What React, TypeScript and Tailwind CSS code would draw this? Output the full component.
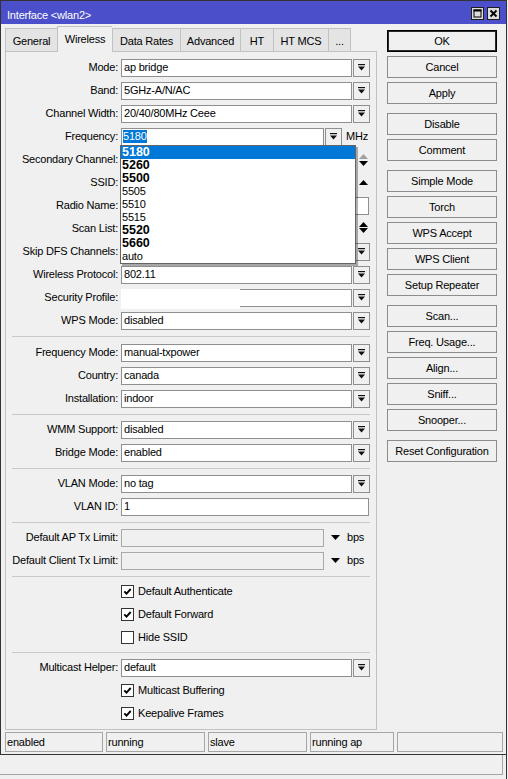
import clsx from 'clsx'
import type { ReactNode } from 'react'

function DropIcon() {
  return (
    <svg width="7" height="7" viewBox="0 0 7 7">
      <rect x="0" y="0" width="7" height="1.2" fill="#111" />
      <path d="M0 2.4H7L3.5 6.6Z" fill="#111" />
    </svg>
  )
}

function DropBtn() {
  return (
    <div className="w-[17px] h-[18px] border border-[#8f8f8f] bg-[#f0f0f0] flex items-center justify-center">
      <DropIcon />
    </div>
  )
}

function Tri({ up, grey }: { up?: boolean; grey?: boolean }) {
  return (
    <svg width="9" height="5" viewBox="0 0 9 5">
      <path d={up ? 'M0 5H9L4.5 0Z' : 'M0 0H9L4.5 5Z'} fill={grey ? '#a0a0a0' : '#000'} />
    </svg>
  )
}

function Box({ className, children }: { className: string; children?: ReactNode }) {
  return (
    <div
      className={clsx(
        'h-[18px] border border-[#8f8f8f] pl-[2px] flex items-center relative whitespace-nowrap',
        className
      )}
    >
      {children}
    </div>
  )
}

function Row({ label, children }: { label: string; children: ReactNode }) {
  return (
    <div className="h-[23px] flex items-center">
      <div className="w-[112px] text-right whitespace-nowrap">{label}</div>
      <div className="ml-[3px] flex items-center gap-[1px]">{children}</div>
    </div>
  )
}

function Select({ label, value }: { label: string; value?: string }) {
  return (
    <Row label={label}>
      <Box className="w-[231px] bg-white">{value}</Box>
      <DropBtn />
    </Row>
  )
}

function Sep({ className }: { className: string }) {
  return (
    <div className={clsx('flex items-center mx-[6px]', className)}>
      <div className="h-px w-full bg-[#c8c8c8]" />
    </div>
  )
}

function Check({ label, on }: { label: string; on?: boolean }) {
  return (
    <div className="h-[23px] flex items-center pl-[115px]">
      <div className="w-[13px] h-[13px] border border-[#333] bg-white flex items-center justify-center">
        {on && (
          <svg width="9" height="9" viewBox="0 0 9 9">
            <path d="M1.3 4.3L3.5 6.6L7.7 2" stroke="#000" strokeWidth="1.9" fill="none" />
          </svg>
        )}
      </div>
      <span className="ml-[4px]">{label}</span>
    </div>
  )
}

function TxLimit({ label }: { label: string }) {
  return (
    <Row label={label}>
      <Box className="w-[203px] bg-[#f0f0f0] border-[#a9a9a9]" />
      <div className="ml-[6px] flex items-center">
        <Tri />
      </div>
      <span className="ml-[6px]">bps</span>
    </Row>
  )
}

const tabs: [string, string][] = [
  ['General', 'w-[52px]'],
  ['Wireless', 'w-[55px]'],
  ['Data Rates', 'w-[68px]'],
  ['Advanced', 'w-[60px]'],
  ['HT', 'w-[33px]'],
  ['HT MCS', 'w-[55px]'],
  ['...', 'w-[23px] border-r'],
]

const buttonGroups = [
  ['OK', 'Cancel', 'Apply'],
  ['Disable', 'Comment'],
  ['Simple Mode', 'Torch', 'WPS Accept', 'WPS Client', 'Setup Repeater'],
  ['Scan...', 'Freq. Usage...', 'Align...', 'Sniff...', 'Snooper...'],
  ['Reset Configuration'],
]

const freqList: [string, boolean][] = [
  ['5180', true],
  ['5260', true],
  ['5500', true],
  ['5505', false],
  ['5510', false],
  ['5515', false],
  ['5520', true],
  ['5660', true],
  ['auto', false],
]

const statusCells: [string, string][] = [
  ['enabled', 'w-[98px]'],
  ['running', 'w-[99px]'],
  ['slave', 'w-[99px]'],
  ['running ap', 'w-[84px]'],
  ['', 'w-[106px]'],
]

export default function App() {
  return (
    <div className="relative w-[508px] h-[779px] overflow-hidden bg-[#f0f0f0] text-black text-[11px] leading-[13px] tracking-[-0.2px] font-['Liberation_Sans',Arial,sans-serif]">
      {/* window */}
      <div className="w-[507px] h-[755px] border border-[#333] flex flex-col">
        {/* title bar */}
        <div className="h-[23px] bg-[#4b4fc9] flex items-start pl-[6px] pr-[6px] text-white">
          <span className="pt-[8px]">Interface &lt;wlan2&gt;</span>
          <div className="ml-auto mt-[6px] flex gap-[3px]">
            <div className="w-[13px] h-[13px] border border-[#1e1e1e] bg-[#dcdcdc] flex items-center justify-center">
              <svg width="9" height="9" viewBox="0 0 9 9">
                <rect x="1" y="1" width="7" height="7" fill="none" stroke="#000" strokeWidth="1" />
                <rect x="0.5" y="0.5" width="8" height="2" fill="#000" />
              </svg>
            </div>
            <div className="w-[13px] h-[13px] border border-[#1e1e1e] bg-[#dcdcdc] flex items-center justify-center">
              <svg width="9" height="9" viewBox="0 0 9 9">
                <path d="M1.5 1.5L7.5 7.5M7.5 1.5L1.5 7.5" stroke="#000" strokeWidth="1.8" />
              </svg>
            </div>
          </div>
        </div>

        {/* body */}
        <div className="flex">
          <div className="w-[376px] pl-[4px]">
            {/* tabs */}
            <div className="h-[27px] flex items-end">
              {tabs.map(([name, w]) =>
                name === 'Wireless' ? (
                  <div
                    key={name}
                    className={clsx(
                      'h-[26px] -mb-px relative z-10 bg-[#f0f0f0] border-l border-t border-[#c2c2c2] flex justify-center pt-[6px]',
                      w
                    )}
                  >
                    {name}
                  </div>
                ) : (
                  <div
                    key={name}
                    className={clsx(
                      'h-[23px] bg-[#e4e4e4] border-l border-t border-[#c2c2c2] flex justify-center pt-[6px]',
                      w
                    )}
                  >
                    {name}
                  </div>
                )
              )}
            </div>

            {/* panel */}
            <div className="w-[372px] h-[679px] border border-[#c2c2c2] pt-[4px]">
              <Select label="Mode:" value="ap bridge" />
              <Select label="Band:" value="5GHz-A/N/AC" />
              <Select label="Channel Width:" value="20/40/80MHz Ceee" />
              <Row label="Frequency:">
                <Box className="w-[203px] bg-white">
                  <span className="-ml-px bg-[#0078d7] text-white">5180</span>
                </Box>
                <DropBtn />
                <span className="ml-[3px]">MHz</span>
              </Row>
              <Row label="Secondary Channel:">
                <Box className="w-[231px] bg-white" />
                <div className="w-[17px] pl-[6px] flex flex-col gap-[2px]">
                  <Tri up grey />
                  <Tri />
                </div>
              </Row>
              <Row label="SSID:">
                <Box className="w-[231px] bg-white" />
                <div className="w-[17px] pl-[6px] flex flex-col">
                  <Tri up />
                </div>
              </Row>
              <Row label="Radio Name:">
                <Box className="w-[248px] bg-white" />
              </Row>
              <Row label="Scan List:">
                <Box className="w-[231px] bg-white" />
                <div className="w-[17px] pl-[6px] flex flex-col gap-[1px] -mt-[2px]">
                  <Tri up />
                  <Tri />
                </div>
              </Row>
              <Select label="Skip DFS Channels:" />
              <Select label="Wireless Protocol:" value="802.11" />
              <Row label="Security Profile:">
                <Box className="w-[231px] bg-white">
                  <div className="absolute -left-px -top-px w-[119px] h-[20px] bg-white" />
                </Box>
                <DropBtn />
              </Row>
              <Select label="WPS Mode:" value="disabled" />

              <Sep className="h-[9px]" />
              <Select label="Frequency Mode:" value="manual-txpower" />
              <Select label="Country:" value="canada" />
              <Select label="Installation:" value="indoor" />

              <Sep className="h-[8px]" />
              <Select label="WMM Support:" value="disabled" />
              <Select label="Bridge Mode:" value="enabled" />

              <Sep className="h-[8px]" />
              <Select label="VLAN Mode:" value="no tag" />
              <Row label="VLAN ID:">
                <Box className="w-[248px] bg-white">1</Box>
              </Row>

              <Sep className="h-[8px]" />
              <TxLimit label="Default AP Tx Limit:" />
              <TxLimit label="Default Client Tx Limit:" />

              <Sep className="h-[8px]" />
              <Check label="Default Authenticate" on />
              <Check label="Default Forward" on />
              <Check label="Hide SSID" />

              <Sep className="h-[7px]" />
              <Select label="Multicast Helper:" value="default" />
              <Check label="Multicast Buffering" on />
              <Check label="Keepalive Frames" on />
            </div>
          </div>

          {/* action buttons */}
          <div className="pl-[10px] pt-[6px] flex flex-col gap-[9px]">
            {buttonGroups.map((group, i) => (
              <div key={i} className="flex flex-col gap-[4px]">
                {group.map((b) => (
                  <div
                    key={b}
                    className={clsx(
                      'w-[110px] h-[22px] bg-[#f0f0f0] flex items-center justify-center',
                      b === 'OK'
                        ? 'border border-black shadow-[inset_0_0_0_1px_#2a2a2a]'
                        : 'border border-[#8c8c8c]'
                    )}
                  >
                    {b}
                  </div>
                ))}
              </div>
            ))}
          </div>
        </div>

        {/* status bar */}
        <div className="flex gap-[3px] pl-[4px] pt-[2px]">
          {statusCells.map(([t, w], i) => (
            <div
              key={i}
              className={clsx('h-[20px] border border-[#a6a6a6] pl-[1px] flex items-center', w)}
            >
              {t}
            </div>
          ))}
        </div>
      </div>

      {/* strip below the window */}
      <div className="w-[507px] h-[24px] border-r border-[#333]">
        <div className="w-[503px] h-[20px] border-b border-r border-[#a6a6a6]" />
      </div>

      {/* open frequency list */}
      <div className="absolute left-[120px] top-[145px] w-[236px] border border-[#646464] bg-white shadow-[2px_2px_0_rgba(0,0,0,0.3)]">
        {freqList.map(([v, bold], i) => (
          <div
            key={v}
            className={clsx(
              'h-[13px] leading-[13px] pl-[1px]',
              bold ? 'font-bold text-[12.5px] tracking-normal' : 'text-[11px]',
              i === 0 && 'bg-[#0078d7] text-white'
            )}
          >
            {v}
          </div>
        ))}
      </div>
    </div>
  )
}
